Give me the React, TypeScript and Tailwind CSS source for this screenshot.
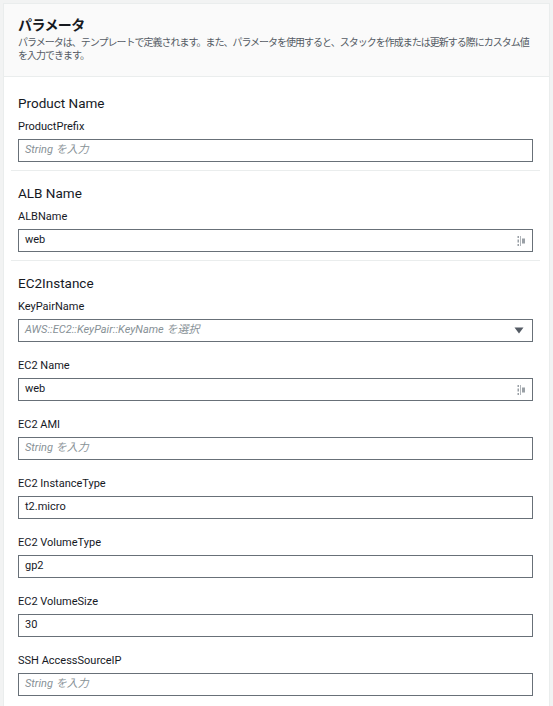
import { ReactNode } from 'react';

const FONT = 'font-["Roboto","Noto_Sans_CJK_JP",sans-serif]';

function AutofillIcon() {
  return (
    <svg width="9" height="12" viewBox="0 0 9 12" aria-hidden="true">
      <rect x="0.5" y="1" width="1.5" height="2" fill="#9aa0a6" />
      <rect x="0.5" y="4.5" width="1.5" height="3" fill="#9aa0a6" />
      <rect x="0.5" y="9" width="1.5" height="2" fill="#9aa0a6" />
      <rect x="3" y="1" width="1" height="10" fill="#b0b5ba" />
      <rect x="5" y="3.5" width="3" height="5" fill="#9aa0a6" />
    </svg>
  );
}

function Field({ label, value, placeholder, icon, select }: {
  label: string;
  value?: string;
  placeholder?: string;
  icon?: boolean;
  select?: boolean;
}) {
  return (
    <div className="mb-[17px] last:mb-0">
      <div className="text-[11px] leading-[14px] text-[#16191f] mb-[5px]">{label}</div>
      <div className="h-[23px] border border-[#687078] bg-white flex items-center pl-[6px] pr-[6px]">
        {value ? (
          <span className="flex-1 text-[11px] text-[#16191f]">{value}</span>
        ) : (
          <span className="flex-1 text-[11px] italic text-[#879196]">{placeholder}</span>
        )}
        {icon && <AutofillIcon />}
        {select && (
          <svg width="10" height="7" viewBox="0 0 10 7" className="mr-[2px]" aria-hidden="true">
            <path d="M0.5 0.5 L9.5 0.5 L5 6.5 Z" fill="#545b64" />
          </svg>
        )}
      </div>
    </div>
  );
}

function Section({ title, children, first, last }: {
  title: string;
  children: ReactNode;
  first?: boolean;
  last?: boolean;
}) {
  return (
    <section className={`${first ? 'pt-[17px]' : 'pt-[13px]'} pb-[8px] ${last ? '' : 'border-b border-[#eaeded]'} ml-[7px] mr-[9px]`}>
      <div className="px-[7px]">
        <h3 className="text-[13.5px] leading-[18px] text-[#16191f] mb-[8px]">{title}</h3>
        {children}
      </div>
    </section>
  );
}

export default function App() {
  return (
    <div className={`min-h-screen bg-[#f2f3f3] p-[3px] ${FONT}`}>
      <div className="bg-white border border-[#eaeded] pb-[12px]">
        {/* Header */}
        <header className="bg-[#fafafa] border-b border-[#eaeded] px-[14px] pt-[12px] pb-[14px]">
          <h2 className="text-[14px] leading-[18px] font-bold text-[#16191f] tracking-[-0.6px] mb-[2px]">パラメータ</h2>
          <p className="text-[10px] leading-[13px] text-[#545b64] tracking-[-1px]">
            パラメータは、テンプレートで定義されます。また、パラメータを使用すると、スタックを作成または更新する際にカスタム値
            <br />
            を入力できます。
          </p>
        </header>

        <Section title="Product Name" first>
          <Field label="ProductPrefix" placeholder="String を入力" />
        </Section>

        <Section title="ALB Name">
          <Field label="ALBName" value="web" icon />
        </Section>

        <Section title="EC2Instance" last>
          <Field label="KeyPairName" placeholder="AWS::EC2::KeyPair::KeyName を選択" select />
          <Field label="EC2 Name" value="web" icon />
          <Field label="EC2 AMI" placeholder="String を入力" />
          <Field label="EC2 InstanceType" value="t2.micro" />
          <Field label="EC2 VolumeType" value="gp2" />
          <Field label="EC2 VolumeSize" value="30" />
          <Field label="SSH AccessSourceIP" placeholder="String を入力" />
        </Section>
      </div>
    </div>
  );
}
